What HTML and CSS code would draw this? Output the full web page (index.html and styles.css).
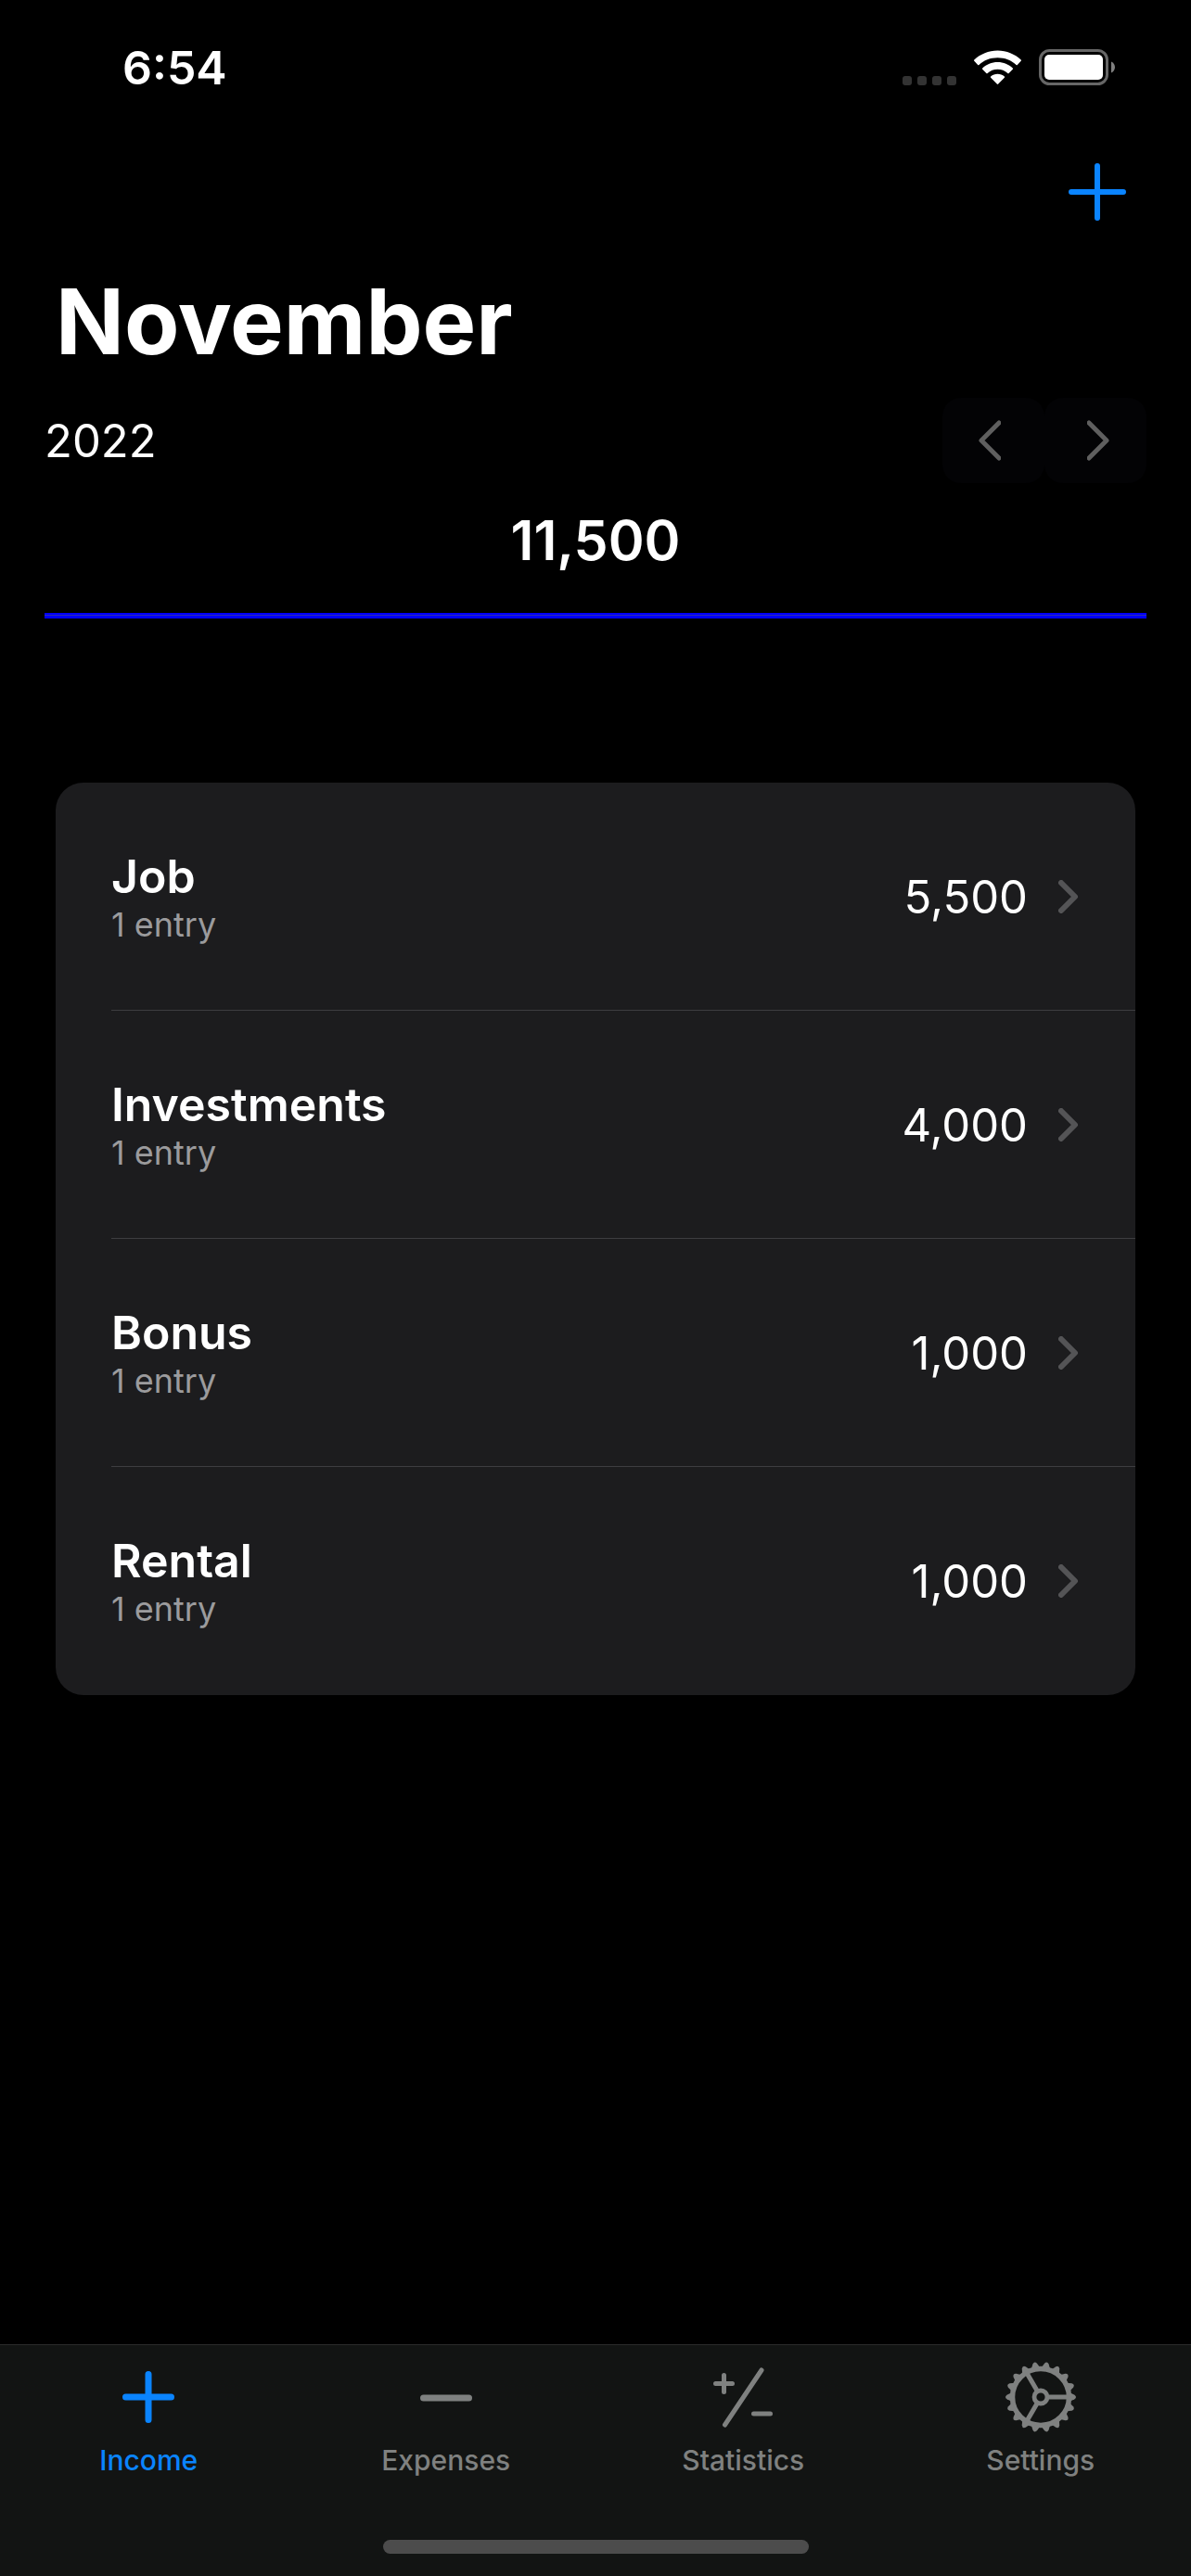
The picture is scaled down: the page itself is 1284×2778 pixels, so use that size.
FILE: index.html
```html
<!DOCTYPE html>
<html lang="en">
<head>
<meta charset="utf-8">
<meta name="viewport" content="width=device-width, initial-scale=1">
<title>Income – November 2022</title>
<link rel="stylesheet" href="styles.css">
</head>
<body>
<div class="app">
  <header class="status-bar">
    <time class="clock">6:54</time>
    <div class="status-icons">
      <svg class="signal" width="58" height="10" viewBox="0 0 58 10" aria-hidden="true">
        <rect width="10" height="10" rx="3"/><rect x="16" width="10" height="10" rx="3"/><rect x="32" width="10" height="10" rx="3"/><rect x="48" width="10" height="10" rx="3"/>
      </svg>
      <svg width="51" height="38" viewBox="0 0 51 38" fill="#fff" aria-hidden="true">
        <path d="M25.500 0.500C35.200 0.500 44.200 4.300 50.700 10.600Q51.300 11.200 50.700 11.800L46.800 15.900Q46.200 16.400 45.600 15.900C40.400 10.900 33.200 8.200 25.500 8.200C17.800 8.200 10.600 10.900 5.400 15.900Q4.800 16.400 4.200 15.900L0.300 11.800Q-0.300 11.200 0.300 10.600C6.800 4.300 15.800 0.500 25.500 0.500Z"/>
        <path d="M25.500 13C31.800 13 37.600 15.400 41.800 19.500Q42.400 20.100 41.800 20.700L37.600 24.900Q37 25.500 36.400 24.900C33.500 22.200 29.700 20.700 25.500 20.700C21.300 20.700 17.500 22.200 14.600 24.900Q14 25.500 13.400 24.900L9.200 20.700Q8.600 20.100 9.200 19.500C13.400 15.400 19.200 13 25.500 13Z"/>
        <path d="M25.500 25.800C28.300 25.800 30.900 26.800 32.900 28.500Q33.500 29.100 32.900 29.700L26.200 36.600Q25.500 37.300 24.800 36.600L18.100 29.700Q17.500 29.100 18.100 28.500C20.100 26.800 22.700 25.800 25.500 25.800Z"/>
      </svg>
      <svg width="82" height="39" viewBox="0 0 82 39" aria-hidden="true">
        <rect x="1.500" y="1.500" width="72" height="36" rx="10" fill="none" stroke="#666" stroke-width="3"/>
        <rect x="6" y="6" width="63" height="27" rx="5" fill="#fff"/>
        <path d="M78 13.500C80.600 14.600 82 17 82 19.500S80.600 24.400 78 25.500Z" fill="#808080"/>
      </svg>
    </div>
  </header>

  <div class="toolbar">
    <button class="add" type="button" aria-label="Add income">
      <svg width="62" height="62" viewBox="0 0 62 62" aria-hidden="true"><path d="M31 3V59M3 31H59"/></svg>
    </button>
  </div>

  <main class="content">
    <h1 class="month">November</h1>
    <div class="period">
      <span class="year">2022</span>
      <div class="stepper">
        <button class="step" type="button" aria-label="Previous month">
          <svg width="24" height="44" viewBox="0 0 24 44" aria-hidden="true"><path d="M22 3L3 22L22 41"/></svg>
        </button>
        <button class="step step-next" type="button" aria-label="Next month">
          <svg width="24" height="44" viewBox="0 0 24 44" aria-hidden="true"><path d="M2 3L21 22L2 41"/></svg>
        </button>
      </div>
    </div>
    <p class="total">11,500</p>
    <hr class="rule">

    <ul class="categories">
      <li><a class="category" href="#job">
        <span class="label"><span class="name">Job</span><span class="count">1 entry</span></span>
        <span class="amount">5,500</span>
        <svg class="chevron" width="22" height="36" viewBox="0 0 22 36" aria-hidden="true"><path d="M3 3L18 18L3 33"/></svg>
      </a></li>
      <li><a class="category" href="#investments">
        <span class="label"><span class="name">Investments</span><span class="count">1 entry</span></span>
        <span class="amount">4,000</span>
        <svg class="chevron" width="22" height="36" viewBox="0 0 22 36" aria-hidden="true"><path d="M3 3L18 18L3 33"/></svg>
      </a></li>
      <li><a class="category" href="#bonus">
        <span class="label"><span class="name">Bonus</span><span class="count">1 entry</span></span>
        <span class="amount">1,000</span>
        <svg class="chevron" width="22" height="36" viewBox="0 0 22 36" aria-hidden="true"><path d="M3 3L18 18L3 33"/></svg>
      </a></li>
      <li><a class="category" href="#rental">
        <span class="label"><span class="name">Rental</span><span class="count">1 entry</span></span>
        <span class="amount">1,000</span>
        <svg class="chevron" width="22" height="36" viewBox="0 0 22 36" aria-hidden="true"><path d="M3 3L18 18L3 33"/></svg>
      </a></li>
    </ul>
  </main>

  <footer class="bottom">
    <nav class="tabs" aria-label="Main">
      <a class="tab tab-active" href="#income" aria-current="page">
        <svg width="80" height="80" viewBox="0 0 80 80" stroke-width="7" aria-hidden="true"><path d="M40 15.500V64.500M15.500 40H64.500"/></svg>
        <span>Income</span>
      </a>
      <a class="tab" href="#expenses">
        <svg width="80" height="80" viewBox="0 0 80 80" stroke-width="7" aria-hidden="true"><path d="M15.500 41H64.500"/></svg>
        <span>Expenses</span>
      </a>
      <a class="tab" href="#statistics">
        <svg width="80" height="80" viewBox="0 0 80 80" stroke-width="5" aria-hidden="true"><path d="M19.500 16.500V34.500M10.500 25.500H28.500M51.500 58H69.500M60 11L20.500 70"/></svg>
        <span>Statistics</span>
      </a>
      <a class="tab" href="#settings">
        <svg width="80" height="80" viewBox="0 0 80 80" aria-hidden="true">
          <defs><path id="tooth" d="M71 35L76.500 37.700Q79.500 40 76.500 42.300L71 45Z" fill="currentColor" stroke="none"/></defs>
          <circle cx="40" cy="40" r="30.500" stroke-width="5.500"/>
          <circle cx="40" cy="40" r="7" stroke-width="4.800"/>
          <path stroke-width="5" stroke-linecap="butt" d="M48 40H69M36 33.100L25.500 14.900M36 46.900L25.500 65.100"/>
          <use href="#tooth"/>
          <use href="#tooth" transform="rotate(20 40 40)"/>
          <use href="#tooth" transform="rotate(40 40 40)"/>
          <use href="#tooth" transform="rotate(60 40 40)"/>
          <use href="#tooth" transform="rotate(80 40 40)"/>
          <use href="#tooth" transform="rotate(100 40 40)"/>
          <use href="#tooth" transform="rotate(120 40 40)"/>
          <use href="#tooth" transform="rotate(140 40 40)"/>
          <use href="#tooth" transform="rotate(160 40 40)"/>
          <use href="#tooth" transform="rotate(180 40 40)"/>
          <use href="#tooth" transform="rotate(200 40 40)"/>
          <use href="#tooth" transform="rotate(220 40 40)"/>
          <use href="#tooth" transform="rotate(240 40 40)"/>
          <use href="#tooth" transform="rotate(260 40 40)"/>
          <use href="#tooth" transform="rotate(280 40 40)"/>
          <use href="#tooth" transform="rotate(300 40 40)"/>
          <use href="#tooth" transform="rotate(320 40 40)"/>
          <use href="#tooth" transform="rotate(340 40 40)"/>
        </svg>
        <span>Settings</span>
      </a>
    </nav>
    <div class="home-indicator"></div>
  </footer>
</div>
</body>
</html>
```
FILE: styles.css
```css
* {
  box-sizing: border-box;
}

body {
  margin: 0;
  background: #000;
  color: #fff;
  font-family: Inter, "Liberation Sans", sans-serif;
}

button {
  padding: 0;
  border: 0;
  background: none;
}

a {
  color: inherit;
  text-decoration: none;
}

svg {
  display: block;
  flex: none;
}

.app {
  display: flex;
  flex-direction: column;
  min-height: 100vh;
}

/* Status bar */
.status-bar {
  display: flex;
  justify-content: space-between;
  align-items: center;
  height: 141px;
  padding: 4px 82px 0 132px;
}

.clock {
  font-size: 50px;
  line-height: 60px;
  font-weight: 600;
}

.status-icons {
  display: flex;
  align-items: flex-end;
  gap: 19px;
}

.signal {
  fill: #333;
}

/* Toolbar */
.toolbar {
  display: flex;
  justify-content: flex-end;
  align-items: center;
  height: 132px;
  padding: 0 70px;
}

.add svg {
  fill: none;
  stroke: #0a84ff;
  stroke-width: 6;
  stroke-linecap: round;
}

/* Month summary */
.content {
  flex: 1;
  padding: 14px 48px 48px;
}

.month {
  margin: 0 0 22px;
  padding-left: 12px;
  font-size: 97px;
  line-height: 120px;
  font-weight: 700;
}

.period {
  display: flex;
  justify-content: space-between;
  align-items: center;
}

.year {
  padding-top: 2px;
  font-size: 49px;
  line-height: 60px;
}

.stepper {
  display: flex;
}

.step {
  display: flex;
  justify-content: center;
  align-items: center;
  width: 110px;
  height: 92px;
  padding-right: 8px;
  border-radius: 20px;
  background: #030305;
}

.step-next {
  padding: 0 0 0 6px;
}

.step svg {
  fill: none;
  stroke: #5f5f5f;
  stroke-width: 5;
  stroke-linecap: round;
  stroke-linejoin: round;
}

.total {
  margin: 26px 0 42px;
  font-size: 59px;
  line-height: 72px;
  font-weight: 600;
  text-align: center;
}

.rule {
  height: 6px;
  margin: 0 0 177px;
  border: 0;
  background: linear-gradient(#00f 2px, #2c2cb0 2px 3px, #00f 3px);
}

/* Category list */
.categories {
  margin: 0 12px;
  padding: 0;
  border-radius: 30px;
  background: #1c1c1e;
  list-style: none;
}

.categories li {
  padding-left: 60px;
}

.category {
  display: flex;
  align-items: center;
  height: 246px;
  padding-right: 61px;
  border-bottom: 1px solid #3d3d40;
}

.categories li:last-child .category {
  border-bottom-color: transparent;
}

.label {
  display: flex;
  flex: 1;
  flex-direction: column;
}

.name {
  font-size: 50px;
  line-height: 60px;
  font-weight: 600;
}

.count {
  color: #9b9b9d;
  font-size: 36px;
  line-height: 44px;
}

.amount {
  margin-right: 33px;
  padding-top: 2px;
  font-size: 49px;
  line-height: 60px;
}

.chevron {
  fill: none;
  stroke: #545456;
  stroke-width: 6;
  stroke-linecap: round;
  stroke-linejoin: round;
}

/* Tab bar */
.bottom {
  display: flex;
  flex-direction: column;
  align-items: center;
  padding-bottom: 24px;
  border-top: 1px solid #2a2b2b;
  background: #121413;
}

.tabs {
  display: grid;
  grid-template-columns: repeat(4, 1fr);
  align-self: stretch;
  padding: 16px 2px 0 0;
}

.tab {
  display: flex;
  flex-direction: column;
  align-items: center;
  gap: 10px;
  color: #7f8180;
  font-size: 30px;
  line-height: 36px;
  font-weight: 500;
}

.tab-active {
  color: #0a84ff;
}

.tab svg {
  fill: none;
  stroke: currentColor;
  stroke-linecap: round;
}

.home-indicator {
  width: 459px;
  height: 15px;
  margin-top: 68px;
  border-radius: 8px;
  background: #4c4c4c;
}
```
